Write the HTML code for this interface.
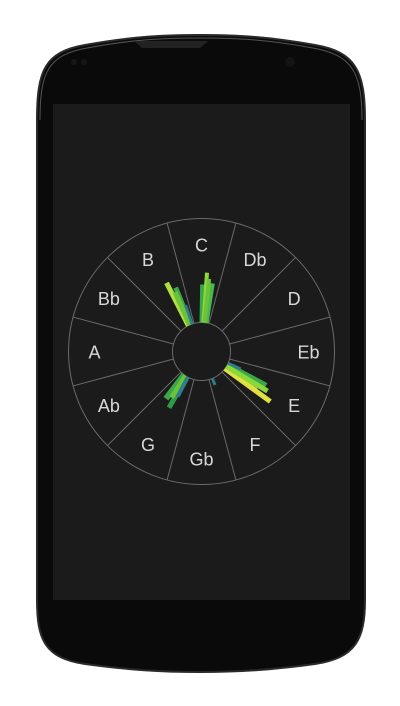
<!DOCTYPE html>
<html><head><meta charset="utf-8"><style>
html,body{margin:0;padding:0;background:#fff;width:400px;height:706px;overflow:hidden}
svg{display:block}
text{font-family:"Liberation Sans",sans-serif;fill:#d8d8d8;font-size:18px;text-anchor:middle;dominant-baseline:central}
</style></head><body>
<svg width="400" height="706" viewBox="0 0 400 706">
<path d="M37 120 C37 70 45 52 85 45 C130 37 160 35 200 35 C240 35 270 37 315 45 C355 52 365 70 365 120 L365 600 C365 640 355 658 315 664 C270 670 240 672 200 672 C160 672 130 670 85 664 C45 658 37 640 37 600 Z" fill="#0a0a0a" stroke="#2a2a2a" stroke-width="2"/>
<path d="M40 120 C40 72 48 55 87 48 C130 40 160 38 200 38 C240 38 270 40 313 48 C352 55 362 72 362 120" fill="none" stroke="#555" stroke-width="1"/>
<path d="M134 41 L142 48 L200 48 L208 41 Z" fill="#222"/>
<circle cx="290" cy="62" r="5" fill="#141414"/>
<circle cx="74" cy="62" r="3" fill="#161616"/><circle cx="84" cy="62" r="3" fill="#161616"/>
<rect x="53" y="104" width="297" height="496" fill="#1b1b1b"/>
<g stroke="#6a6a6a" stroke-width="1" fill="none">
<circle cx="201.5" cy="351.5" r="133"/>
<circle cx="201.5" cy="351.5" r="29"/>
</g>
<g id="lines" stroke="#6a6a6a" stroke-width="1"></g>
<g id="bars"></g>
<g id="labels"></g>
<script>
var cx=201.5,cy=351.5,ns="http://www.w3.org/2000/svg";
var L=document.getElementById('lines');
for(var i=0;i<12;i++){var a=(i*30+15)*Math.PI/180;var l=document.createElementNS(ns,'line');
l.setAttribute('x1',cx+29*Math.sin(a));l.setAttribute('y1',cy-29*Math.cos(a));
l.setAttribute('x2',cx+133*Math.sin(a));l.setAttribute('y2',cy-133*Math.cos(a));L.appendChild(l);}
var names=["C","Db","D","Eb","E","F","Gb","G","Ab","A","Bb","B"];
var T=document.getElementById('labels');
for(var i=0;i<12;i++){var a=i*30*Math.PI/180;var t=document.createElementNS(ns,'text');
t.setAttribute('x',cx+107*Math.sin(a));t.setAttribute('y',cy+1-107*Math.cos(a));t.textContent=names[i];T.appendChild(t);}
var B=document.getElementById('bars');
function bar(ang,len,w,col){var a=ang*Math.PI/180;var l=document.createElementNS(ns,'line');
l.setAttribute('x1',cx+29*Math.sin(a));l.setAttribute('y1',cy-29*Math.cos(a));
l.setAttribute('x2',cx+(29+len)*Math.sin(a));l.setAttribute('y2',cy-(29+len)*Math.cos(a));
l.setAttribute('stroke',col);l.setAttribute('stroke-width',w);B.appendChild(l);}
// C
bar(1,38,5,"#3aa84a");bar(9,40,5,"#4ab84a");bar(4,50,4,"#8cd83a");bar(6,44,4,"#6cc23a");
// B
bar(-22,40,5,"#3aa84a");bar(-27,48,5,"#b0e040");bar(-24,36,5,"#6cc23a");bar(-19,20,3,"#2e7f88");
// E
bar(124,38,6,"#6cc23a");bar(118,44,6,"#3aa84a");bar(126,56,5,"#e0e040");bar(121,48,5,"#8cd83a");bar(114,14,3,"#2e7f88");
// G
bar(-143,30,6,"#3aa84a");bar(-150,36,5,"#2f9a4a");bar(-147,26,5,"#6cc23a");bar(-152,22,4,"#2e7f88");
bar(158,7,3,"#2e7f88");
</script>
</svg>
</body></html>
